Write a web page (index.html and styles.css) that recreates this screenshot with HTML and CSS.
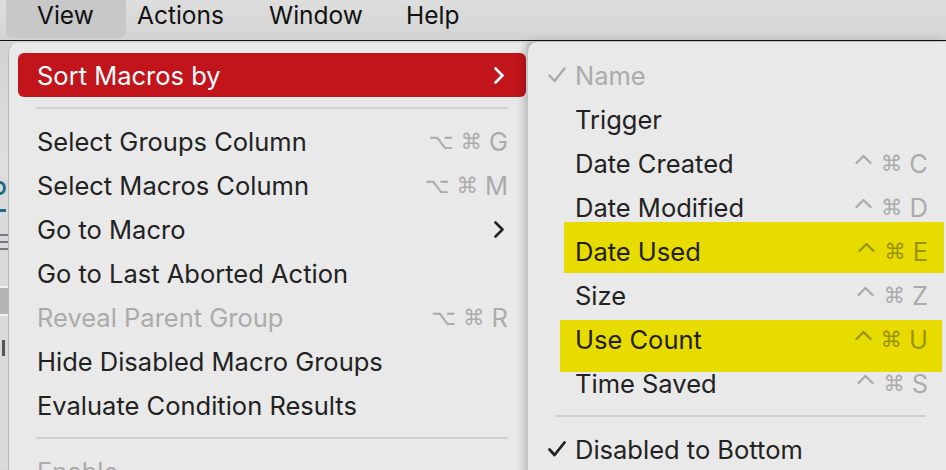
FILE: index.html
```html
<!DOCTYPE html>
<html lang="en">
<head>
<meta charset="utf-8">
<title>View menu</title>
<link rel="stylesheet" href="styles.css">
</head>
<body>
<div class="screen">
  <div class="menubar">
    <span class="mb-item mb-view">View</span>
    <span class="mb-item mb-actions">Actions</span>
    <span class="mb-item mb-window">Window</span>
    <span class="mb-item mb-help">Help</span>
  </div>
  <div class="desk">
    <div class="app-strip">
      <div class="strip-top"></div>
      <div class="strip-dot"></div>
      <div class="strip-dash"></div>
      <div class="strip-lines"><i></i><i></i><i></i></div>
      <div class="strip-bar"></div>
      <div class="strip-stem"></div>
    </div>

    <div class="menu main">
      <div class="row active">
        <span class="label">Sort Macros by</span>
        <svg class="chev" width="10" height="17" viewBox="0 0 10 17"><polyline points="1.5,1.5 8.5,8.5 1.5,15.5" fill="none" stroke="currentColor" stroke-width="2.6" stroke-linecap="round" stroke-linejoin="round"/></svg>
      </div>
      <div class="sep"></div>
      <div class="row"><span class="label">Select Groups Column</span><span class="keys"><span class="sym">⌥</span><span class="sym">⌘</span><span>G</span></span></div>
      <div class="row"><span class="label">Select Macros Column</span><span class="keys"><span class="sym">⌥</span><span class="sym">⌘</span><span>M</span></span></div>
      <div class="row">
        <span class="label">Go to Macro</span>
        <svg class="chev" width="10" height="17" viewBox="0 0 10 17"><polyline points="1.5,1.5 8.5,8.5 1.5,15.5" fill="none" stroke="currentColor" stroke-width="2.6" stroke-linecap="round" stroke-linejoin="round"/></svg>
      </div>
      <div class="row"><span class="label">Go to Last Aborted Action</span></div>
      <div class="row disabled"><span class="label">Reveal Parent Group</span><span class="keys"><span class="sym">⌥</span><span class="sym">⌘</span><span>R</span></span></div>
      <div class="row"><span class="label">Hide Disabled Macro Groups</span></div>
      <div class="row"><span class="label">Evaluate Condition Results</span></div>
      <div class="sep"></div>
      <div class="row disabled"><span class="label">Enable</span></div>
    </div>

    <div class="menu sub">
      <div class="row disabled">
        <span class="check"><svg width="18" height="16" viewBox="0 0 18 16"><polyline points="1.5,8.5 6.5,14 16.5,1.5" fill="none" stroke="currentColor" stroke-width="2.4" stroke-linecap="round" stroke-linejoin="round"/></svg></span>
        <span class="label">Name</span>
      </div>
      <div class="row"><span class="check"></span><span class="label">Trigger</span></div>
      <div class="row"><span class="check"></span><span class="label">Date Created</span><span class="keys"><svg class="caret" width="17" height="18" viewBox="0 0 17 18"><polyline points="1.5,9 8.5,2 15.5,9" fill="none" stroke="currentColor" stroke-width="2.3" stroke-linecap="round" stroke-linejoin="round"/></svg><span class="sym">⌘</span><span>C</span></span></div>
      <div class="row"><span class="check"></span><span class="label">Date Modified</span><span class="keys"><svg class="caret" width="17" height="18" viewBox="0 0 17 18"><polyline points="1.5,9 8.5,2 15.5,9" fill="none" stroke="currentColor" stroke-width="2.3" stroke-linecap="round" stroke-linejoin="round"/></svg><span class="sym">⌘</span><span>D</span></span></div>
      <div class="row mark mark-a"><span class="check"></span><span class="label">Date Used</span><span class="keys"><svg class="caret" width="17" height="18" viewBox="0 0 17 18"><polyline points="1.5,9 8.5,2 15.5,9" fill="none" stroke="currentColor" stroke-width="2.3" stroke-linecap="round" stroke-linejoin="round"/></svg><span class="sym">⌘</span><span>E</span></span></div>
      <div class="row"><span class="check"></span><span class="label">Size</span><span class="keys"><svg class="caret" width="17" height="18" viewBox="0 0 17 18"><polyline points="1.5,9 8.5,2 15.5,9" fill="none" stroke="currentColor" stroke-width="2.3" stroke-linecap="round" stroke-linejoin="round"/></svg><span class="sym">⌘</span><span>Z</span></span></div>
      <div class="row mark mark-b"><span class="check"></span><span class="label">Use Count</span><span class="keys"><svg class="caret" width="17" height="18" viewBox="0 0 17 18"><polyline points="1.5,9 8.5,2 15.5,9" fill="none" stroke="currentColor" stroke-width="2.3" stroke-linecap="round" stroke-linejoin="round"/></svg><span class="sym">⌘</span><span>U</span></span></div>
      <div class="row"><span class="check"></span><span class="label">Time Saved</span><span class="keys"><svg class="caret" width="17" height="18" viewBox="0 0 17 18"><polyline points="1.5,9 8.5,2 15.5,9" fill="none" stroke="currentColor" stroke-width="2.3" stroke-linecap="round" stroke-linejoin="round"/></svg><span class="sym">⌘</span><span>S</span></span></div>
      <div class="sep"></div>
      <div class="row">
        <span class="check"><svg width="18" height="16" viewBox="0 0 18 16"><polyline points="1.5,8.5 6.5,14 16.5,1.5" fill="none" stroke="currentColor" stroke-width="2.8" stroke-linecap="round" stroke-linejoin="round"/></svg></span>
        <span class="label">Disabled to Bottom</span>
      </div>
    </div>
  </div>
</div>
</body>
</html>
```

FILE: styles.css
```css
* { box-sizing: border-box; }

html, body {
  margin: 0;
  padding: 0;
}

body {
  width: 946px;
  height: 470px;
  overflow: hidden;
  background: #d6d6d6;
  font-family: Inter, "Noto Sans", "DejaVu Sans", sans-serif;
  color: #222222;
}

.screen {
  width: 946px;
  height: 470px;
  overflow: hidden;
}

/* ---------- menu bar ---------- */
.menubar {
  height: 41px;
  display: flex;
  align-items: flex-start;
  padding-left: 6px;
  background: linear-gradient(#dedede, #d3d3d3);
  border-bottom: 1px solid #111111;
  font-size: 24.5px;
  color: #111111;
}

.mb-item {
  display: block;
  height: 38px;
  line-height: 30px;
  white-space: nowrap;
}

.mb-view {
  width: 120px;
  padding-left: 31px;
  background: #c8c8c8;
  border-radius: 0 0 7px 7px;
}

.mb-actions { width: 132px; padding-left: 11px; }
.mb-window  { width: 137px; padding-left: 11px; }
.mb-help    { padding-left: 11px; }

/* ---------- desk ---------- */
.desk {
  display: flex;
  align-items: flex-start;
  height: 429px;
  padding-top: 1px;
}

.app-strip {
  width: 8px;
  flex: none;
  height: 100%;
  display: flex;
  flex-direction: column;
  background: #dadada;
  overflow: hidden;
  margin-top: -1px;
}

.strip-top {
  height: 136px;
  background: linear-gradient(#d2d2d2, #e0e0e0);
}
.strip-dot {
  margin: 4px 0 0 -6px;
  width: 12px;
  height: 14px;
  border: 3px solid #1b6d8a;
  border-radius: 50%;
}
.strip-dash {
  margin: 14px 0 0 0;
  width: 6px;
  height: 3px;
  background: #1b6d8a;
}
.strip-lines {
  margin-top: 22px;
  display: flex;
  flex-direction: column;
  gap: 5px;
}
.strip-lines i {
  display: block;
  height: 2px;
  background: #77778a;
}
.strip-bar {
  margin-top: 36px;
  height: 30px;
  background: #b3b3b3;
  border-top: 2px solid #f2f2f2;
  border-bottom: 2px solid #f2f2f2;
}
.strip-stem {
  margin-top: 24px;
  margin-left: 2px;
  width: 3px;
  height: 16px;
  background: #555555;
}

/* ---------- menus ---------- */
.menu {
  background: #e9e9e9;
  font-size: 25.5px;
  height: 440px;
}

.main {
  width: 519px;
  flex: none;
  padding-top: 10px;
  border-radius: 10px 0 0 0;
  border-left: 1px solid #bcbcbc;
  border-top: 1px solid #dcdcdc;
}

.sub {
  flex: 1;
  position: relative;
  z-index: 1;
  padding-top: 11px;
  border-radius: 10px 0 0 0;
  box-shadow: -3px 0 9px rgba(0, 0, 0, 0.22);
  border-left: 1px solid #c4c4c4;
}

.row {
  position: relative;
  height: 44px;
  display: flex;
  align-items: center;
  white-space: nowrap;
}

.main .row {
  margin: 0 1px 0 9px;
  padding: 0 18px 0 19px;
  border-radius: 6px;
}

.sub .row {
  margin: 0 10px 0 10px;
  padding: 0 8px 0 10px;
}

.label {
  flex: 1;
  position: relative;
}

.row.active {
  background: #c1141b;
  color: #ffffff;
}

.row.disabled { color: #ababab; }

.chev {
  display: block;
  margin-right: 4px;
}

.keys {
  display: flex;
  align-items: center;
  gap: 7px;
  color: #ababab;
  position: relative;
}

.sym {
  font-family: "DejaVu Sans", sans-serif;
  font-size: 21.5px;
}

.caret {
  display: block;
  margin-right: 2px;
}

.check {
  width: 18px;
  flex: none;
  margin-right: 9px;
  display: flex;
  align-items: center;
}
.check svg { display: block; }

.sep {
  height: 22px;
  display: flex;
  align-items: center;
}
.sep::before {
  content: "";
  display: block;
  width: 100%;
  height: 2px;
  background: #d1d1d1;
}
.main .sep { padding: 0 19px 0 27px; }
.sub .sep { padding: 0 20px 0 27px; }

/* ---------- annotation highlights ---------- */
.mark::before {
  content: "";
  position: absolute;
  z-index: -1;
  background: #e8db00;
}
.mark-a::before { left: 26px; right: -8px; top: -7px; bottom: 0; }
.mark-b::before { left: 22px; right: -6px; top: 3px; bottom: -11px; }
.mark .keys { color: #9a9300; }
.mark .label { color: #1e1e00; }
```
